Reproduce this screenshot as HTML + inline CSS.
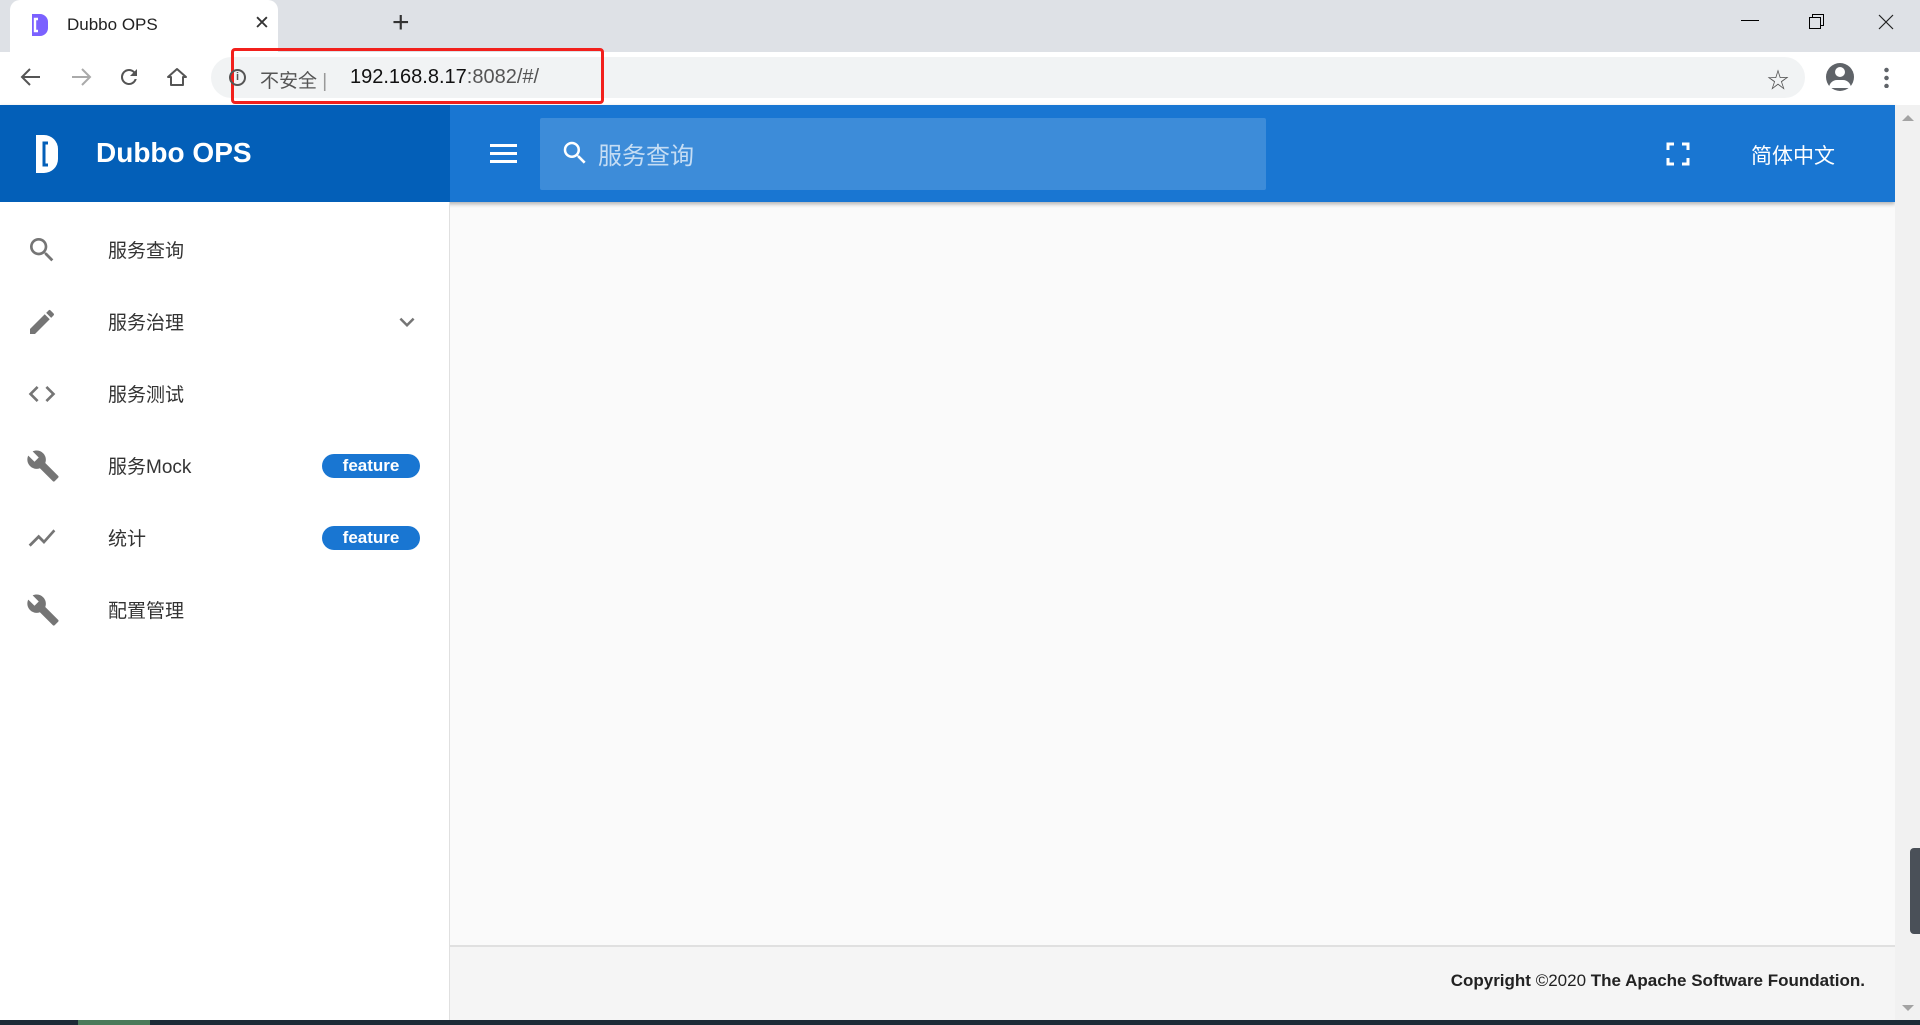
<!DOCTYPE html>
<html><head><meta charset="utf-8"><style>
*{margin:0;padding:0;box-sizing:border-box}
body{width:1920px;height:1025px;overflow:hidden;font-family:"Liberation Sans","Noto Sans CJK SC",sans-serif;background:#fafafa;position:relative}
.abs{position:absolute}
.tabs{left:0;top:0;width:1920px;height:52px;background:#dee1e6}
.tab{left:10px;top:0;width:268px;height:52px;background:#fff;border-radius:10px 10px 0 0}
.toolbar{left:0;top:52px;width:1920px;height:53px;background:#fff}
.omni{left:211px;top:57px;width:1594px;height:41px;background:#f1f3f4;border-radius:21px}
.side{left:0;top:202px;width:450px;height:818px;background:#fff;border-right:1px solid #e0e0e0}
.item{left:0;width:450px;height:72px;display:flex;align-items:center;font-size:19px;color:#333}
.item svg{position:absolute;left:26px}
.item span{position:absolute;left:108px;top:22px}
.badge{position:absolute;left:322px;width:98px;height:24px;border-radius:12px;background:#1976d2;color:#fff;font-weight:bold;font-size:17px;text-align:center;line-height:24px}
</style></head><body>
<div class="abs tabs"></div>
<div class="abs tab"></div>
<svg class="abs" style="left:30px;top:14px" width="18" height="22" viewBox="0 0 18 22"><path d="M2 0h8a8 8 0 0 1 8 8v6a8 8 0 0 1-8 8H2z" fill="#7b61ff"/><path d="M8 5h-3v12h3" stroke="#fff" stroke-width="2.4" fill="none"/></svg>
<div class="abs" style="left:67px;top:15px;font-size:17px;color:#222">Dubbo OPS</div>
<div class="abs" style="left:254px;top:12px;font-size:19px;color:#333">✕</div>
<div class="abs" style="left:392px;top:6px;font-size:30px;color:#333">+</div>
<div class="abs" style="left:1741px;top:20px;width:18px;height:1px;background:#000"></div>
<div class="abs" style="left:1812px;top:14px;width:12px;height:12px;border:1px solid #000;background:#dee1e6"></div>
<div class="abs" style="left:1809px;top:17px;width:12px;height:12px;border:1px solid #000;background:#dee1e6"></div>
<svg class="abs" style="left:1878px;top:14px" width="16" height="16" viewBox="0 0 16 16"><path d="M1 1l14 14M15 1L1 15" stroke="#222" stroke-width="1.2"/></svg>
<div class="abs toolbar"></div>
<svg class="abs" style="left:20px;top:66px" width="22" height="22" viewBox="0 0 22 22"><path d="M20 11H3M10 3l-8 8 8 8" stroke="#555" stroke-width="2" fill="none"/></svg>
<svg class="abs" style="left:70px;top:66px" width="22" height="22" viewBox="0 0 22 22"><path d="M2 11h17M12 3l8 8-8 8" stroke="#aaa" stroke-width="2" fill="none"/></svg>
<svg class="abs" style="left:117px;top:65px" width="24" height="24" viewBox="0 0 24 24"><path fill="#555" d="M17.65 6.35A7.96 7.96 0 0 0 12 4a8 8 0 1 0 7.73 10h-2.08A6 6 0 1 1 12 6c1.66 0 3.14.69 4.22 1.78L13 11h7V4l-2.35 2.35z"/></svg>
<svg class="abs" style="left:165px;top:65px" width="24" height="24" viewBox="0 0 24 24"><path d="M12 4L3 12h3v8h12v-8h3z" stroke="#555" stroke-width="2" fill="none" stroke-linejoin="round"/></svg>
<div class="abs omni"></div>
<div class="abs" style="left:231px;top:48px;width:373px;height:56px;border:3px solid #f2201c;border-radius:4px"></div>
<div class="abs" style="left:229px;top:69px;width:17px;height:17px;border:2px solid #555;border-radius:50%;font-size:11px;text-align:center;line-height:13px;color:#555;font-weight:bold">i</div>
<div class="abs" style="left:260px;top:66px;font-size:19px;color:#555">不安全 <span style="color:#999">|</span></div>
<div class="abs" style="left:350px;top:66px;font-size:20px;color:#111">192.168.8.17<span style="color:#555">:8082/#/</span></div>
<div class="abs" style="left:1767px;top:63px;font-size:22px;color:#555">☆</div>
<div class="abs" style="left:1826px;top:63px;width:28px;height:28px;border-radius:50%;background:#5f6368"></div>
<div class="abs" style="left:1835px;top:67px;width:10px;height:10px;border-radius:50%;background:#fff"></div>
<div class="abs" style="left:1829px;top:80px;width:22px;height:8px;border-radius:10px 10px 0 0;background:#fff"></div>
<div class="abs" style="left:1884px;top:66px;width:5px;height:22px;background:radial-gradient(circle,#5f6368 2px,transparent 2.5px) 0 0/5px 8px"></div>
<!-- header -->
<div class="abs" style="left:0;top:105px;width:1895px;height:97px;background:#1976d2;box-shadow:0 2px 4px rgba(0,0,0,.3)"></div>
<div class="abs" style="left:0;top:105px;width:450px;height:97px;background:#035fb8"></div>
<svg class="abs" style="left:36px;top:135px" width="22" height="38" viewBox="0 0 22 38"><path d="M0 0h8a14 14 0 0 1 14 14v10a14 14 0 0 1-14 14H0z" fill="#fff"/><path d="M12 8h-4v22h4" stroke="#035fb8" stroke-width="3" fill="none"/></svg>
<div class="abs" style="left:96px;top:137px;font-size:28px;font-weight:bold;color:#fff">Dubbo OPS</div>
<div class="abs" style="left:490px;top:144px;width:27px;height:3px;background:#fff;box-shadow:0 8px 0 #fff,0 16px 0 #fff"></div>
<div class="abs" style="left:540px;top:118px;width:726px;height:72px;background:rgba(255,255,255,.16);border-radius:2px"></div>
<svg class="abs" style="left:560px;top:138px" width="30" height="30" viewBox="0 0 24 24"><path fill="#fff" d="M15.5 14h-.79l-.28-.27A6.47 6.47 0 0 0 16 9.5 6.5 6.5 0 1 0 9.5 16c1.61 0 3.09-.59 4.23-1.57l.27.28v.79l5 4.99L20.49 19l-4.99-5zm-6 0C7.01 14 5 11.99 5 9.5S7.01 5 9.5 5 14 7.01 14 9.5 11.99 14 9.5 14z"/></svg>
<div class="abs" style="left:598px;top:136px;font-size:24px;color:rgba(255,255,255,.7)">服务查询</div>
<svg class="abs" style="left:1666px;top:142px" width="24" height="24" viewBox="0 0 24 24"><path fill="none" stroke="#fff" stroke-width="3" d="M2 8V2h6M16 2h6v6M22 16v6h-6M8 22H2v-6"/></svg>
<div class="abs" style="left:1751px;top:140px;font-size:21px;color:#fff">简体中文</div>
<!-- sidebar -->
<div class="abs side">
<div class="abs item" style="top:12px"><svg width="32" height="32" viewBox="0 0 24 24"><path fill="#757575" d="M15.5 14h-.79l-.28-.27A6.47 6.47 0 0 0 16 9.5 6.5 6.5 0 1 0 9.5 16c1.61 0 3.09-.59 4.23-1.57l.27.28v.79l5 4.99L20.49 19l-4.99-5zm-6 0C7.01 14 5 11.99 5 9.5S7.01 5 9.5 5 14 7.01 14 9.5 11.99 14 9.5 14z"/></svg><span>服务查询</span></div>
<div class="abs item" style="top:84px"><svg width="32" height="32" viewBox="0 0 24 24"><path fill="#757575" d="M3 17.25V21h3.75L17.81 9.94l-3.75-3.75L3 17.25zM20.71 7.04a1 1 0 0 0 0-1.41l-2.34-2.34a1 1 0 0 0-1.41 0l-1.83 1.83 3.75 3.75 1.83-1.83z"/></svg><span>服务治理</span><svg style="left:392px" width="30" height="30" viewBox="0 0 24 24"><path fill="#757575" d="M7.41 8.59 12 13.17l4.59-4.58L18 10l-6 6-6-6z"/></svg></div>
<div class="abs item" style="top:156px"><svg width="32" height="32" viewBox="0 0 24 24"><path fill="#757575" d="M9.4 16.6 4.8 12l4.6-4.6L8 6l-6 6 6 6 1.4-1.4zm5.2 0 4.6-4.6-4.6-4.6L16 6l6 6-6 6-1.4-1.4z"/></svg><span>服务测试</span></div>
<div class="abs item" style="top:228px"><svg width="34" height="34" viewBox="0 0 24 24"><path fill="#757575" d="M22.7 19l-9.1-9.1c.9-2.3.4-5-1.5-6.9-2-2-5-2.4-7.4-1.3L9 6 6 9 1.6 4.7C.4 7.1.9 10.1 2.9 12.1c1.9 1.9 4.6 2.4 6.9 1.5l9.1 9.1c.4.4 1 .4 1.4 0l2.3-2.3c.5-.4.5-1.1.1-1.4z"/></svg><span>服务Mock</span><div class="badge">feature</div></div>
<div class="abs item" style="top:300px"><svg width="32" height="32" viewBox="0 0 24 24"><path fill="#757575" d="M3.5 18.49l6-6.01 4 4L22 6.92l-1.41-1.41-7.09 7.97-4-4L2 16.99z"/></svg><span>统计</span><div class="badge">feature</div></div>
<div class="abs item" style="top:372px"><svg width="34" height="34" viewBox="0 0 24 24"><path fill="#757575" d="M22.7 19l-9.1-9.1c.9-2.3.4-5-1.5-6.9-2-2-5-2.4-7.4-1.3L9 6 6 9 1.6 4.7C.4 7.1.9 10.1 2.9 12.1c1.9 1.9 4.6 2.4 6.9 1.5l9.1 9.1c.4.4 1 .4 1.4 0l2.3-2.3c.5-.4.5-1.1.1-1.4z"/></svg><span>配置管理</span></div>
</div>
<!-- footer -->
<div class="abs" style="left:450px;top:945px;width:1445px;height:75px;background:#f5f5f5;border-top:2px solid #e0e0e0"></div>
<div class="abs" style="left:1300px;top:971px;width:565px;text-align:right;font-size:17px;color:#222;font-weight:bold">Copyright <span style="font-weight:normal">©2020</span> The Apache Software Foundation.</div>
<!-- scrollbar -->
<div class="abs" style="left:1895px;top:105px;width:25px;height:915px;background:#f1f1f1"></div>
<div class="abs" style="left:1902px;top:115px;width:0;height:0;border-left:6px solid transparent;border-right:6px solid transparent;border-bottom:6px solid #a3a3a3"></div>
<div class="abs" style="left:1902px;top:1005px;width:0;height:0;border-left:6px solid transparent;border-right:6px solid transparent;border-top:6px solid #a3a3a3"></div>
<div class="abs" style="left:1910px;top:848px;width:10px;height:86px;background:#4a5058;border-radius:4px 0 0 4px"></div>
<div class="abs" style="left:0;top:1020px;width:1920px;height:5px;background:#1c2a36"></div>
<div class="abs" style="left:78px;top:1020px;width:72px;height:5px;background:#4a7a5a"></div>
</body></html>
